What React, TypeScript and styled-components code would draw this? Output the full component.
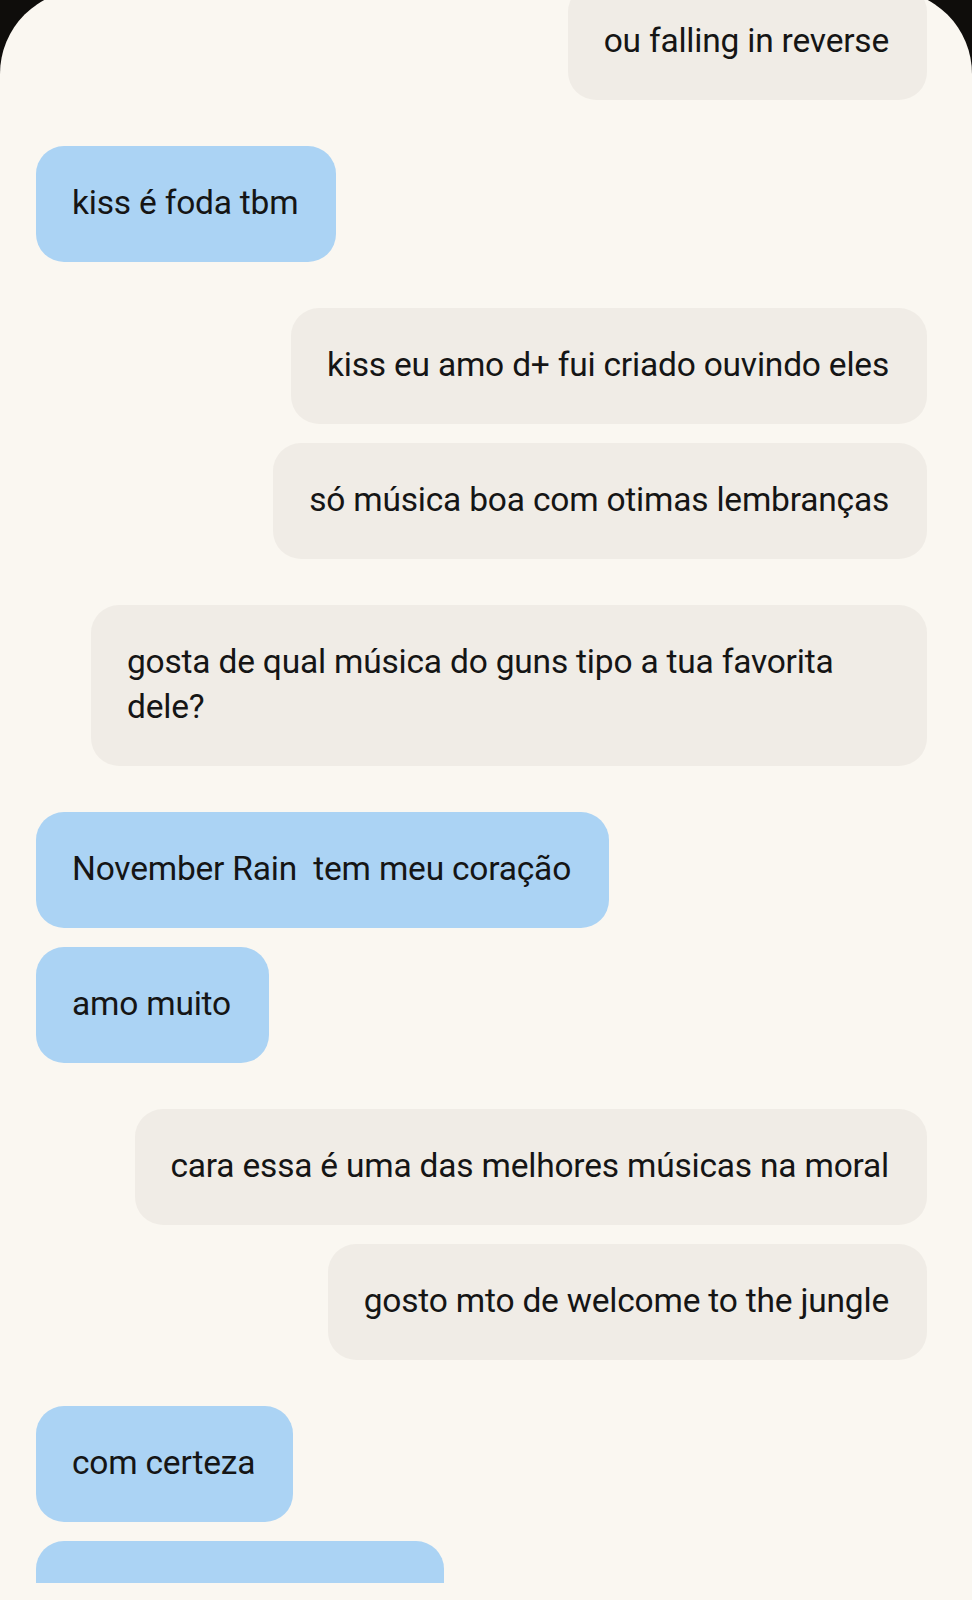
import React from "react";
import styled, { createGlobalStyle } from "styled-components";

const GlobalStyle = createGlobalStyle`
  html, body {
    margin: 0;
    padding: 0;
    background: #0f0d0b;
  }
  body {
    font-family: "Roboto", "Liberation Sans", sans-serif;
    -webkit-font-smoothing: antialiased;
  }
  * { box-sizing: border-box; }
`;

const Screen = styled.div`
  margin-top: -10px;
  height: 1610px;
  background: #faf7f1;
  border-radius: 84px 84px 0 0;
  display: flex;
  flex-direction: column;
  overflow: hidden;
`;

const Thread = styled.div`
  flex: 0 0 1599px;
  margin-top: -6px;
  padding: 0 45px 0 36px;
  display: flex;
  flex-direction: column;
  gap: 46px;
  overflow: hidden;
`;

const Footer = styled.div`
  flex: 1;
  background: #faf7f1;
`;

const Group = styled.div<{ $mine: boolean }>`
  display: flex;
  flex-direction: column;
  align-items: ${(p) => (p.$mine ? "flex-end" : "flex-start")};
  gap: 19px;
`;

const Bubble = styled.div<{ $mine: boolean; $width?: number }>`
  max-width: 836px;
  ${(p) => (p.$width ? `width: ${p.$width}px; min-height: 116px;` : "")}
  padding: 33.5px 38px 37.5px 36px;
  border-radius: 28px;
  background: ${(p) => (p.$mine ? "#f0ece6" : "#abd3f4")};
  color: #151515;
  font-size: 33.5px;
  line-height: 45px;
  letter-spacing: -0.2px;
  white-space: pre-wrap;
`;

type Msg = { text: string; width?: number };
type G = { mine: boolean; msgs: Msg[] };

const groups: G[] = [
  { mine: true, msgs: [{ text: "ou falling in reverse" }] },
  { mine: false, msgs: [{ text: "kiss é foda tbm" }] },
  {
    mine: true,
    msgs: [
      { text: "kiss eu amo d+ fui criado ouvindo eles" },
      { text: "só música boa com otimas lembranças" },
    ],
  },
  { mine: true, msgs: [{ text: "gosta de qual música do guns tipo a tua favorita dele?" }] },
  {
    mine: false,
    msgs: [{ text: "November Rain  tem meu coração" }, { text: "amo muito" }],
  },
  {
    mine: true,
    msgs: [
      { text: "cara essa é uma das melhores músicas na moral" },
      { text: "gosto mto de welcome to the jungle" },
    ],
  },
  { mine: false, msgs: [{ text: "com certeza" }, { text: "", width: 408 }] },
];

export default function App() {
  return (
    <>
      <GlobalStyle />
      <Screen>
        <Thread>
          {groups.map((g, i) => (
            <Group key={i} $mine={g.mine}>
              {g.msgs.map((m, j) => (
                <Bubble key={j} $mine={g.mine} $width={m.width}>
                  {m.text}
                </Bubble>
              ))}
            </Group>
          ))}
        </Thread>
        <Footer />
      </Screen>
    </>
  );
}
